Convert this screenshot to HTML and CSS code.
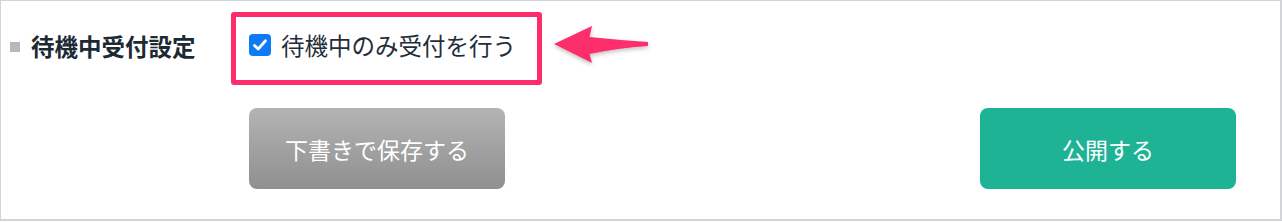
FILE: index.html
```html
<!DOCTYPE html>
<html lang="ja">
<head>
  <meta charset="UTF-8" />
  <meta name="viewport" content="width=device-width, initial-scale=1.0" />
  <title>待機中受付設定</title>
  <link rel="stylesheet" href="styles.css">
</head>
<body>
  <div class="panel">
    <div class="setting-row">
      <div class="setting-label">
        <span class="bullet"></span>
        <span>待機中受付設定</span>
      </div>

      <label class="notice">
        <span class="check">
          <svg viewBox="0 0 22 22" width="22" height="22">
            <path d="M5.5 11.5 L9.2 15 L16.5 6.8" fill="none" stroke="#fff" stroke-width="2.8" stroke-linecap="round" stroke-linejoin="round" />
          </svg>
        </span>
        <span class="notice-text">待機中のみ受付を行う</span>
      </label>

      <svg class="arrow" viewBox="0 0 100 44" width="100" height="44">
        <defs>
          <filter id="shadow" x="-20%" y="-30%" width="140%" height="170%">
            <feDropShadow dx="0" dy="2" stdDeviation="2" flood-color="#000" flood-opacity="0.25" />
          </filter>
        </defs>
        <path d="M2 19 L40 1 L37.5 12 Q66 15 96 17 L96 21 Q66 23 37.5 29 L40 38 Z" fill="#fd2d6c" filter="url(#shadow)" />
      </svg>
    </div>

    <div class="actions">
      <button class="btn btn-draft">下書きで保存する</button>
      <button class="btn btn-publish">公開する</button>
    </div>
  </div>
</body>
</html>
```

FILE: styles.css
```css
body {
  margin: 0;
  padding: 0;
  background: #fff;
  font-family: "Noto Sans CJK JP", "Noto Sans", sans-serif;
}

.panel {
  width: 1282px;
  height: 221px;
  box-sizing: border-box;
  border-style: solid;
  border-color: #d1d5d9;
  border-width: 1px 2px 2px 1px;
  padding: 11px 44px 0 9px;
}

.setting-row {
  display: flex;
  align-items: center;
  height: 73px;
}

.setting-label {
  display: flex;
  align-items: center;
  width: 221px;
  margin-bottom: 5px;
  font-size: 23.5px;
  font-weight: bold;
  color: #1c2a34;
}

.bullet {
  width: 10px;
  height: 10px;
  margin: 2px 11px 0 0;
  background: #b5b9bc;
}

.notice {
  display: flex;
  align-items: center;
  box-sizing: border-box;
  width: 311px;
  height: 73px;
  padding: 0 0 8px 13px;
  border: 5px solid #fd2d6c;
  border-radius: 3px;
}

.check {
  display: flex;
  width: 22px;
  height: 22px;
  border-radius: 4px;
  background: #0d7bf5;
}

.notice-text {
  margin-left: 10px;
  font-size: 23.5px;
  color: #1f2e3a;
}

.arrow {
  margin: -4px 0 0 10px;
}

.actions {
  display: flex;
  justify-content: space-between;
  margin-top: 23px;
  padding-left: 239px;
}

.btn {
  width: 256px;
  height: 81px;
  border: none;
  border-radius: 8px;
  color: #fff;
  font-family: inherit;
  font-size: 23px;
  cursor: pointer;
}

.btn-draft {
  background: linear-gradient(#b4b4b4, #8f8f8f);
}

.btn-publish {
  background: #1fb396;
}
```
